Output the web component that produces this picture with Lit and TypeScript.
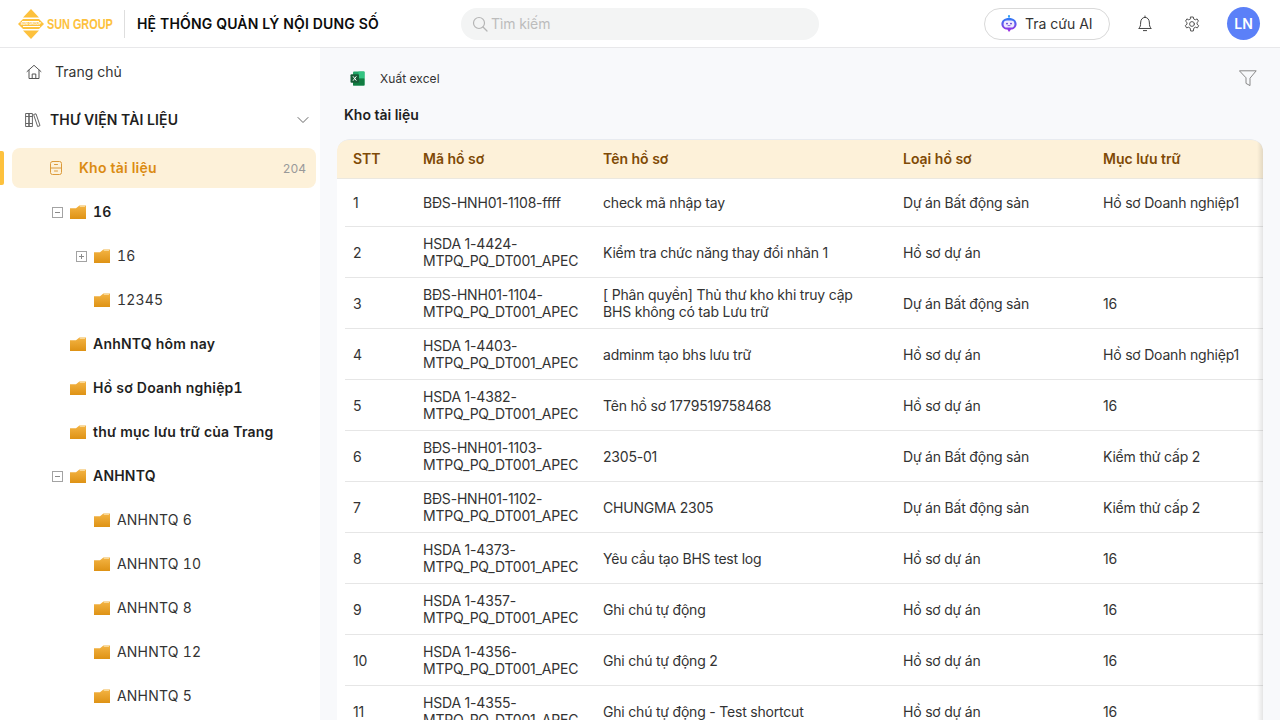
import { LitElement, html, css, svg, type TemplateResult } from 'lit'
import { customElement } from 'lit/decorators.js'

interface TreeItem { label: string, level: number, bold?: boolean, toggle?: 'open' | 'closed' }

const TREE: TreeItem[] = [
  { label: '16', level: 1, bold: true, toggle: 'open' },
  { label: '16', level: 2, toggle: 'closed' },
  { label: '12345', level: 2 },
  { label: 'AnhNTQ hôm nay', level: 1, bold: true },
  { label: 'Hồ sơ Doanh nghiệp1', level: 1, bold: true },
  { label: 'thư mục lưu trữ của Trang', level: 1, bold: true },
  { label: 'ANHNTQ', level: 1, bold: true, toggle: 'open' },
  { label: 'ANHNTQ 6', level: 2 },
  { label: 'ANHNTQ 10', level: 2 },
  { label: 'ANHNTQ 8', level: 2 },
  { label: 'ANHNTQ 12', level: 2 },
  { label: 'ANHNTQ 5', level: 2 }
]

const BDS = 'Dự án Bất động sản'
const HSDA = 'Hồ sơ dự án'
const DN = 'Hồ sơ Doanh nghiệp1'
const KT = 'Kiểm thử cấp 2'
const SUFFIX = 'MTPQ_PQ_DT001_APEC'

const ROWS: string[][] = [
  ['1', 'BĐS-HNH01-1108-ffff', 'check mã nhập tay', BDS, DN],
  ['2', `HSDA 1-4424-\n${SUFFIX}`, 'Kiểm tra chức năng thay đổi nhãn 1', HSDA, ''],
  ['3', `BĐS-HNH01-1104-\n${SUFFIX}`, '[ Phân quyền] Thủ thư kho khi truy cập\nBHS không có tab Lưu trữ', BDS, '16'],
  ['4', `HSDA 1-4403-\n${SUFFIX}`, 'adminm tạo bhs lưu trữ', HSDA, DN],
  ['5', `HSDA 1-4382-\n${SUFFIX}`, 'Tên hồ sơ 1779519758468', HSDA, '16'],
  ['6', `BĐS-HNH01-1103-\n${SUFFIX}`, '2305-01', BDS, KT],
  ['7', `BĐS-HNH01-1102-\n${SUFFIX}`, 'CHUNGMA 2305', BDS, KT],
  ['8', `HSDA 1-4373-\n${SUFFIX}`, 'Yêu cầu tạo BHS test log', HSDA, '16'],
  ['9', `HSDA 1-4357-\n${SUFFIX}`, 'Ghi chú tự động', HSDA, '16'],
  ['10', `HSDA 1-4356-\n${SUFFIX}`, 'Ghi chú tự động 2', HSDA, '16'],
  ['11', `HSDA 1-4355-\n${SUFFIX}`, 'Ghi chú tự động - Test shortcut', HSDA, '16']
]

const stroke = (w: number, h: number, body: TemplateResult | ReturnType<typeof svg>, color = '#555', sw = 1): TemplateResult => html`
  <svg width=${w} height=${h} viewBox="0 0 ${w} ${h}" fill="none" stroke=${color} stroke-width=${sw} stroke-linecap="round" stroke-linejoin="round">${body}</svg>`

const logo = html`
  <svg width="26" height="30" viewBox="0 0 26 30">
    <path d="M13 0 L21 8.5 H5 Z" fill="#fdc13d"/>
    <path d="M13 30 L5 21.5 H21 Z" fill="#fdc13d"/>
    <path d="M0 15 L5 10 H21 L26 15 L21 20 H5 Z" fill="#fdc13d"/>
    <path d="M4 12.5 H21 M22 17.5 H5" stroke="#fff" stroke-width="1"/>
    <text x="13" y="16.3" text-anchor="middle" font-size="3.4" font-weight="700" fill="#fff" font-family="Liberation Sans, sans-serif">SUN GROUP</text>
  </svg>`

const homeIcon = stroke(16, 16, svg`<path d="M1 7.6 L8 1.3 L15 7.6"/><path d="M3 6.2 V14.5 H13 V6.2"/><path d="M6.2 14.5 V10 H9.8 V14.5"/>`)
const booksIcon = stroke(16, 16, svg`<rect x="1" y="1.5" width="3.2" height="13"/><rect x="4.2" y="1.5" width="3.2" height="13"/><path d="M1 4.5 H7.4 M1 11.5 H7.4"/><path d="M9 2.4 L11 1.8 L15 13.6 L13 14.4 Z"/>`, '#666')
const chevronIcon = stroke(12, 8, svg`<path d="M1 1.5 L6 6.5 L11 1.5"/>`, '#666')
const drawerIcon = stroke(14, 16, svg`<rect x="1.5" y="1.5" width="11" height="13" rx="2"/><path d="M1.5 8 H12.5 M5.5 4.5 H8.5 M5.5 11 H8.5"/>`, '#dc9a3a')
const bellIcon = stroke(16, 18, svg`<path d="M2 13.2 C3.4 11.8 3.6 10.4 3.6 8 C3.6 4.6 5.4 2.4 8 2.4 C10.6 2.4 12.4 4.6 12.4 8 C12.4 10.4 12.6 11.8 14 13.2 Z"/><path d="M8 1 V2.4 M6.4 15.6 H9.6"/>`, '#444')
const gearIcon = stroke(16, 16, svg`<circle cx="8" cy="8" r="2.4"/><path d="M6.7 1 H9.3 L9.7 3 L11.3 3.8 L13.1 2.9 L14.5 5.2 L13 6.5 V8.2 L14.7 9.6 L13.4 11.9 L11.4 11.2 L9.8 12.2 L9.3 15 H6.7 L6.2 12.2 L4.6 11.2 L2.6 11.9 L1.3 9.6 L3 8.2 V6.5 L1.5 5.2 L2.9 2.9 L4.7 3.8 L6.3 3 Z"/>`, '#555')
const searchIcon = stroke(16, 16, svg`<circle cx="7" cy="7" r="5.5"/><path d="M11 11 L15 15"/>`, '#b5b5b5', 1.2)
const filterIcon = stroke(18, 17, svg`<path d="M0.8 0.8 H17.2 L11 8.2 V15.6 L7 13.4 V8.2 Z"/>`, '#888')

const excelIcon = html`
  <svg width="15" height="15" viewBox="0 0 15 15">
    <rect x="3" y="0.5" width="11.5" height="14" rx="1" fill="#21a366"/>
    <rect x="8.5" y="0.5" width="6" height="7" fill="#33c481"/>
    <rect x="3" y="7.5" width="11.5" height="7" fill="#107c41"/>
    <rect x="0.5" y="3.2" width="8.5" height="8.5" rx="1" fill="#185c37"/>
    <path d="M3 5.3 L6.4 9.7 M6.4 5.3 L3 9.7" stroke="#fff" stroke-width="1"/>
  </svg>`

const botIcon = html`
  <svg width="16" height="18" viewBox="0 0 16 18">
    <defs><linearGradient id="bot" x1="0" y1="0" x2="0" y2="1"><stop offset="0" stop-color="#2f7df6"/><stop offset="1" stop-color="#a526e0"/></linearGradient></defs>
    <circle cx="8" cy="1.2" r="1.1" fill="#2f9df6"/>
    <path d="M8 2 V4" stroke="#2f9df6"/>
    <path d="M8 3 C12.6 3 15.6 5.6 15.6 9 C15.6 12.4 12.6 14.6 10 14.6 L8 17 L6.4 14.6 C3.4 14.6 0.4 12.4 0.4 9 C0.4 5.6 3.4 3 8 3 Z" fill="url(#bot)"/>
    <rect x="2.6" y="5.6" width="10.8" height="7" rx="3.4" fill="#efeaff"/>
    <circle cx="6" cy="8.6" r="0.9" fill="#5a34d6"/>
    <circle cx="10" cy="8.6" r="0.9" fill="#5a34d6"/>
    <path d="M6.6 10.6 H9.4" stroke="#5a34d6" stroke-width="0.7"/>
  </svg>`

const folderIcon = html`
  <svg class="folder" width="16" height="14" viewBox="0 0 16 14">
    <defs><linearGradient id="fold" x1="0" y1="0" x2="0" y2="1"><stop offset="0" stop-color="#f4b444"/><stop offset="1" stop-color="#de9215"/></linearGradient></defs>
    <path d="M0 3.2 H6 L9.4 0.4 H16 V14 H0 Z" fill="url(#fold)"/>
    <path d="M9.8 1.4 H15" stroke="#fde7b8" stroke-width="0.8"/>
  </svg>`

const toggleIcon = (kind: 'open' | 'closed'): TemplateResult => html`
  <svg class="toggle" width="11" height="11" viewBox="0 0 11 11">
    <rect x="0.5" y="0.5" width="10" height="10" fill="#fff" stroke="#a3a3a3"/>
    <path d="M3 5.5 H8" stroke="#8a8a8a"/>
    ${kind === 'closed' ? svg`<path d="M5.5 3 V8" stroke="#8a8a8a"/>` : ''}
  </svg>`

@customElement('app-root')
export class AppRoot extends LitElement {
  static styles = css`
    :host {
      display: block;
      width: 1280px;
      height: 720px;
      overflow: hidden;
      font-family: Inter, "Noto Sans", sans-serif;
      font-size: 14px;
      color: #333;
      background: #fff;
    }

    svg { display: block; flex: none; }

    .header {
      height: 47px;
      border-bottom: 1px solid #e8e8ea;
      display: flex;
      align-items: center;
      padding: 0 20px 0 17px;
    }
    .logo { display: flex; align-items: center; gap: 3px; width: 107px; padding-left: 1px; box-sizing: border-box; }
    .logo-text {
      font-family: "Liberation Sans", sans-serif;
      font-weight: 700;
      font-size: 15.5px;
      color: #fdc13d;
      white-space: nowrap;
      transform: scaleX(0.7);
      transform-origin: left center;
    }
    .divider { width: 1px; height: 28px; background: #dedede; margin-right: 12px; }
    .title { font-weight: 600; font-size: 14px; letter-spacing: 0.18px; color: #0c0c0c; width: 324px; white-space: nowrap; }
    .search {
      width: 358px;
      height: 32px;
      background: #f3f4f4;
      border-radius: 16px;
      display: flex;
      align-items: center;
      gap: 3px;
      padding-left: 11px;
      box-sizing: border-box;
      color: #bcbcbc;
      letter-spacing: -0.1px;
    }
    .ai {
      margin-left: 165px;
      width: 126px;
      height: 32px;
      border: 1px solid #d9d9d9;
      border-radius: 16px;
      box-sizing: border-box;
      display: flex;
      align-items: center;
      gap: 8px;
      padding-left: 16px;
      color: #333;
    }
    .bell { margin-left: 27px; }
    .gear { margin-left: 31px; }
    .avatar {
      margin-left: 27px;
      width: 33px;
      height: 33px;
      border-radius: 50%;
      background: #5b80f8;
      color: #fff;
      font-weight: 600;
      display: flex;
      align-items: center;
      justify-content: center;
    }

    .body { display: flex; height: 672px; }

    .sidebar { width: 320px; flex: none; overflow: hidden; position: relative; }
    .sidebar span { padding-bottom: 2px; }
    .nav-home { height: 48px; display: flex; align-items: center; gap: 13px; padding-left: 26px; }
    .nav-lib {
      height: 48px;
      display: flex;
      align-items: center;
      padding: 0 11px 0 25px;
      gap: 9px;
      font-weight: 600;
      letter-spacing: 0.1px;
      color: #1f1f1f;
    }
    .nav-lib span { flex: 1; }
    .active {
      margin: 4px 4px 2px 12px;
      height: 40px;
      border-radius: 8px;
      background: #fdf1d9;
      display: flex;
      align-items: center;
      padding: 0 10px 0 37px;
      gap: 16px;
      color: #db8b12;
      font-weight: 600;
      letter-spacing: 0.25px;
    }
    .active .name { flex: 1; }
    .active .count { font-size: 12px; font-weight: 400; color: #999; font-variant-numeric: tabular-nums; letter-spacing: 0; padding-bottom: 0; }
    .marker {
      position: absolute;
      left: 0;
      top: 103px;
      width: 4px;
      height: 34px;
      border-radius: 0 2px 2px 0;
      background: #fdc13d;
    }
    .tree-row {
      height: 44px;
      display: flex;
      align-items: center;
      white-space: nowrap;
      color: #333;
      letter-spacing: 0.2px;
      font-variant-numeric: tabular-nums;
    }
    .tree-row.l1 { padding-left: 70px; }
    .tree-row.l2 { padding-left: 94px; }
    .tree-row.bold { font-weight: 600; color: #1f1f1f; }
    .tree-row .toggle { margin-left: -18px; margin-right: 7px; }
    .tree-row .folder { margin-right: 7px; }

    .main { flex: 1; min-width: 0; background: #f8f9fb; padding-left: 17px; padding-right: 17px; overflow: hidden; }
    .toolbar { height: 60px; display: flex; align-items: center; padding: 0 6px 0 13px; }
    .export { display: flex; align-items: center; gap: 15px; font-size: 12px; color: #333; flex: 1; letter-spacing: 0.05px; }
    .heading { margin-left: 7px; font-weight: 600; line-height: 17px; color: #1f1f1f; margin-top: -2px; margin-bottom: 16px; }

    .table {
      position: relative;
      background: #fff;
      border-radius: 12px 12px 0 0;
      overflow: hidden;
      height: 600px;
    }
    .table::after {
      content: '';
      position: absolute;
      top: 0;
      right: 0;
      bottom: 0;
      width: 6px;
      background: linear-gradient(to right, rgba(0, 0, 0, 0), rgba(0, 0, 0, 0.1));
    }
    .row {
      display: grid;
      grid-template-columns: 70px 180px 300px 200px 1fr;
      align-items: center;
      line-height: 17px;
      margin-left: 8px;
      border-bottom: 1px solid #e6e6e6;
      padding: 8px 0;
      min-height: 31px;
    }
    .row.head {
      margin-left: 0;
      padding: 0 0 2px 8px;
      height: 40px;
      min-height: 0;
      box-sizing: border-box;
      background: #fdf1d9;
      border-top: 1px solid #e8ebf0;
      border-bottom: 1px solid #ebe8e0;
      font-weight: 600;
      border-radius: 12px 12px 0 0;
    }
    .cell { padding-left: 8px; white-space: pre-line; color: #333; letter-spacing: -0.2px; }
    .row.head .cell { color: #7f4a06; letter-spacing: 0; }
    .row:nth-child(2) { padding: 7px 0 8px; min-height: 32px; }
  `

  render (): TemplateResult {
    return html`
      <div class="header">
        <div class="logo">${logo}<span class="logo-text">SUN GROUP</span></div>
        <div class="divider"></div>
        <div class="title">HỆ THỐNG QUẢN LÝ NỘI DUNG SỐ</div>
        <div class="search">${searchIcon}<span>Tìm kiếm</span></div>
        <div class="ai">${botIcon}<span>Tra cứu AI</span></div>
        <div class="bell">${bellIcon}</div>
        <div class="gear">${gearIcon}</div>
        <div class="avatar">LN</div>
      </div>
      <div class="body">
        <aside class="sidebar">
          <div class="nav-home">${homeIcon}<span>Trang chủ</span></div>
          <div class="nav-lib">${booksIcon}<span>THƯ VIỆN TÀI LIỆU</span>${chevronIcon}</div>
          <div class="marker"></div>
          <div class="active">${drawerIcon}<span class="name">Kho tài liệu</span><span class="count">204</span></div>
          ${TREE.map(item => html`
            <div class="tree-row l${item.level} ${item.bold === true ? 'bold' : ''}">
              ${item.toggle !== undefined ? toggleIcon(item.toggle) : ''}
              ${folderIcon}<span>${item.label}</span>
            </div>`)}
        </aside>
        <main class="main">
          <div class="toolbar">
            <div class="export">${excelIcon}<span>Xuất excel</span></div>
            ${filterIcon}
          </div>
          <div class="heading">Kho tài liệu</div>
          <div class="table">
            <div class="row head">
              ${['STT', 'Mã hồ sơ', 'Tên hồ sơ', 'Loại hồ sơ', 'Mục lưu trữ'].map(h => html`<div class="cell">${h}</div>`)}
            </div>
            ${ROWS.map(r => html`<div class="row">${r.map(c => html`<div class="cell">${c}</div>`)}</div>`)}
          </div>
        </main>
      </div>
    `
  }
}
